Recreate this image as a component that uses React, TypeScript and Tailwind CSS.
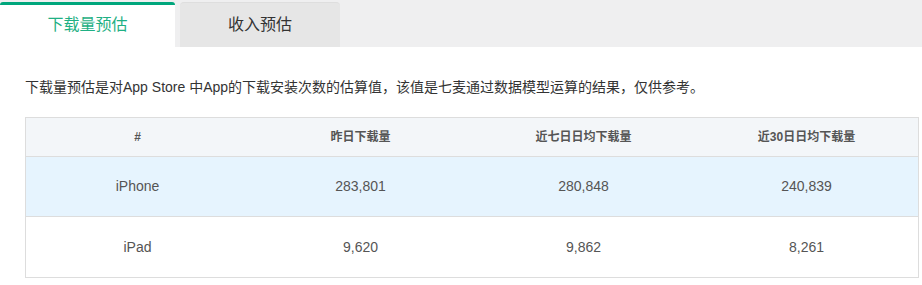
import React from 'react';

const rows = [
  { device: 'iPhone', yesterday: '283,801', week: '280,848', month: '240,839' },
  { device: 'iPad', yesterday: '9,620', week: '9,862', month: '8,261' },
];

const App: React.FC = () => {
  return (
    <div
      className="h-[285px] w-[922px] overflow-hidden bg-white text-[#333]"
      style={{ fontFamily: '"Liberation Sans", "Noto Sans CJK SC", sans-serif' }}
    >
      <div className="flex h-[47px] items-end bg-[#efeff0]">
        <div className="flex h-[45px] w-[175px] items-center justify-center rounded-t-[3px] border-t-[3px] border-[#00a67c] bg-white pb-[2px] text-[16px] text-[#1fb084]">
          下载量预估
        </div>
        <div className="ml-[5px] flex h-[45px] w-[160px] items-center justify-center rounded-t-[4px] border-t border-[#dedede] bg-[#e6e6e6] text-[16px] text-[#333]">
          收入预估
        </div>
      </div>

      <div className="px-[25px] pt-[30px]">
        <p className="text-[14px] leading-[20px] text-[#333]">
          下载量预估是对App Store 中App的下载安装次数的估算值，该值是七麦通过数据模型运算的结果，仅供参考。
        </p>

        <div className="mt-[20px] w-[894px] border border-[#dddddd]">
          <div className="grid h-[39px] grid-cols-4 items-center border-b border-[#dddddd] bg-[#f3f6f9] text-[12px] font-bold text-[#555]">
            <div className="text-center">#</div>
            <div className="text-center">昨日下载量</div>
            <div className="text-center">近七日日均下载量</div>
            <div className="text-center">近30日日均下载量</div>
          </div>
          {rows.map((r, i) => (
            <div
              key={r.device}
              className={
                i === 0
                  ? 'grid h-[60px] grid-cols-4 items-center border-b border-[#dddddd] bg-[#e6f4fe] text-[14px] text-[#555]'
                  : 'grid h-[60px] grid-cols-4 items-center bg-white text-[14px] text-[#555]'
              }
            >
              <div className="text-center">{r.device}</div>
              <div className="text-center">{r.yesterday}</div>
              <div className="text-center">{r.week}</div>
              <div className="text-center">{r.month}</div>
            </div>
          ))}
        </div>
      </div>
    </div>
  );
};

export default App;
